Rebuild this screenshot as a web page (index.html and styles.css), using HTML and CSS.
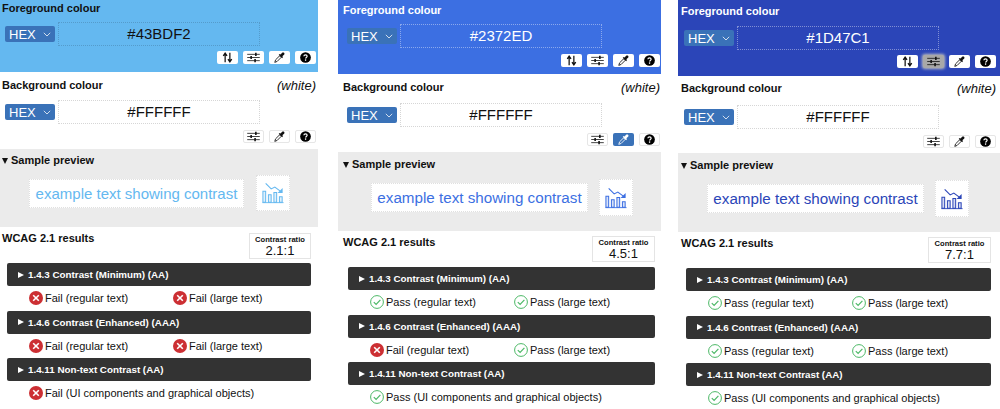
FILE: index.html
```html
<!DOCTYPE html>
<html>
<head>
    <title>Colour Contrast Analyser</title>
    <link rel="stylesheet" href="styles.css">
</head>
<body>
    <svg class="sprites" width="0" height="0">
        <symbol id="i-swap" viewBox="0 0 14 14">
            <path d="M4 13V3M1.6 5 4 1.5 6.4 5M10 1v10M7.6 9 10 12.5 12.4 9" fill="none" stroke="currentColor" stroke-width="1.6"/>
        </symbol>
        <symbol id="i-sliders" viewBox="0 0 18 14">
            <path d="M1 3h16M1 7h16M1 11h16" fill="none" stroke="currentColor" stroke-width="1"/>
            <path d="M11 1h2v4h-2zM5 5h2v4H5zM10 9h2v4h-2z" fill="currentColor"/>
        </symbol>
        <symbol id="i-dropper" viewBox="0 0 14 14">
            <path d="M1 13.2 2 10l5-5 2 2-5 5z" fill="none" stroke="currentColor" stroke-width="1.1"/>
            <path d="M6 3.6 7.4 2.4 8.4 3.3 10.3 1.1c.9-.8 1.9-.6 2.5 0s.8 1.6 0 2.5l-2.2 1.9.9 1-1.2 1.4z" fill="currentColor"/>
        </symbol>
        <symbol id="i-help" viewBox="0 0 14 14">
            <circle cx="7" cy="7" r="6.8" fill="#000"/>
            <path d="M4.9 5.5C5 4.2 5.900 3.600 7 3.600s2.100.7 2.100 1.800c0 1.500-2 1.500-2 3" fill="none" stroke="#fff" stroke-width="1.500"/>
            <circle cx="7.100" cy="10.300" r="1" fill="#fff"/>
        </symbol>
        <symbol id="i-chart" viewBox="0 0 24 24">
            <path d="M1 22V10h3v12zM7 22v-8h3v8zM13 22V11.500h3V22zM19 22v-6h3v6z" fill="currentColor" fill-opacity=".2" stroke="currentColor" stroke-width="1.100"/>
            <path d="M.5 22.500h23" stroke="currentColor" stroke-width="1"/>
            <path d="M4 1.500l6 6 4-2 6 4.500" fill="none" stroke="currentColor" stroke-width="1.200"/>
            <path d="M22.500 6.500V12h-5.500z" fill="currentColor"/>
        </symbol>
        <symbol id="i-fail" viewBox="0 0 14 14">
            <circle cx="7" cy="7" r="7" fill="#cc2f33"/>
            <path d="M4.200 4.200l5.600 5.600M9.800 4.200l-5.600 5.600" stroke="#fff" stroke-width="1.600"/>
        </symbol>
        <symbol id="i-pass" viewBox="0 0 14 14">
            <circle cx="7" cy="7" r="6.400" fill="#fff" stroke="#4cb866" stroke-width="1"/>
            <path d="M3.800 7.200l2.300 2.300 4.300-4.600" fill="none" stroke="#4cb866" stroke-width="1.200"/>
        </symbol>
        <symbol id="i-chevron" viewBox="0 0 8 5">
            <path d="M.8.8 4 4l3.200-3.200" fill="none" stroke="currentColor" stroke-width="1"/>
        </symbol>
    </svg>

    <div class="panels">

        <div class="panel panel-light">
            <div class="fg-section">
                <div class="label">Foreground colour</div>
                <div class="colour-row">
                    <div class="format">HEX <svg class="chevron"><use href="#i-chevron"/></svg></div>
                    <div class="hex-input">#43BDF2</div>
                </div>
                <div class="tools">
                    <button class="tool"><svg class="ic-swap"><use href="#i-swap"/></svg></button>
                    <button class="tool"><svg class="ic-sliders"><use href="#i-sliders"/></svg></button>
                    <button class="tool"><svg class="ic-dropper"><use href="#i-dropper"/></svg></button>
                    <button class="tool"><svg class="ic-help"><use href="#i-help"/></svg></button>
                </div>
            </div>
            <div class="bg-section">
                <div class="label-row"><div class="label">Background colour</div><em class="named">(white)</em></div>
                <div class="colour-row">
                    <div class="format">HEX <svg class="chevron"><use href="#i-chevron"/></svg></div>
                    <div class="hex-input">#FFFFFF</div>
                </div>
                <div class="tools">
                    <button class="tool bordered"><svg class="ic-sliders"><use href="#i-sliders"/></svg></button>
                    <button class="tool bordered"><svg class="ic-dropper"><use href="#i-dropper"/></svg></button>
                    <button class="tool bordered"><svg class="ic-help"><use href="#i-help"/></svg></button>
                </div>
            </div>
            <div class="preview">
                <div class="label"><span class="tri-down"></span>Sample preview</div>
                <div class="preview-row">
                    <div class="preview-text">example text showing contrast</div>
                    <div class="preview-icon"><svg class="ic-chart"><use href="#i-chart"/></svg></div>
                </div>
            </div>
            <div class="results">
                <div class="results-head">
                    <div class="label">WCAG 2.1 results</div>
                    <div class="ratio"><b>Contrast ratio</b><span>2.1:1</span></div>
                </div>
                <div class="bar"><span class="tri-right"></span>1.4.3 Contrast (Minimum) (AA)</div>
                <div class="status-row">
                    <div class="status"><svg class="ic-status"><use href="#i-fail"/></svg>Fail (regular text)</div>
                    <div class="status"><svg class="ic-status"><use href="#i-fail"/></svg>Fail (large text)</div>
                </div>
                <div class="bar"><span class="tri-right"></span>1.4.6 Contrast (Enhanced) (AAA)</div>
                <div class="status-row">
                    <div class="status"><svg class="ic-status"><use href="#i-fail"/></svg>Fail (regular text)</div>
                    <div class="status"><svg class="ic-status"><use href="#i-fail"/></svg>Fail (large text)</div>
                </div>
                <div class="bar"><span class="tri-right"></span>1.4.11 Non-text Contrast (AA)</div>
                <div class="status-row">
                    <div class="status wide"><svg class="ic-status"><use href="#i-fail"/></svg>Fail (UI components and graphical objects)</div>
                </div>
            </div>
        </div>

        <div class="panel panel-mid">
            <div class="fg-section">
                <div class="label">Foreground colour</div>
                <div class="colour-row">
                    <div class="format">HEX <svg class="chevron"><use href="#i-chevron"/></svg></div>
                    <div class="hex-input">#2372ED</div>
                </div>
                <div class="tools">
                    <button class="tool"><svg class="ic-swap"><use href="#i-swap"/></svg></button>
                    <button class="tool"><svg class="ic-sliders"><use href="#i-sliders"/></svg></button>
                    <button class="tool"><svg class="ic-dropper"><use href="#i-dropper"/></svg></button>
                    <button class="tool"><svg class="ic-help"><use href="#i-help"/></svg></button>
                </div>
            </div>
            <div class="bg-section">
                <div class="label-row"><div class="label">Background colour</div><em class="named">(white)</em></div>
                <div class="colour-row">
                    <div class="format">HEX <svg class="chevron"><use href="#i-chevron"/></svg></div>
                    <div class="hex-input">#FFFFFF</div>
                </div>
                <div class="tools">
                    <button class="tool bordered"><svg class="ic-sliders"><use href="#i-sliders"/></svg></button>
                    <button class="tool tool-on"><svg class="ic-dropper"><use href="#i-dropper"/></svg></button>
                    <button class="tool bordered"><svg class="ic-help"><use href="#i-help"/></svg></button>
                </div>
            </div>
            <div class="preview">
                <div class="label"><span class="tri-down"></span>Sample preview</div>
                <div class="preview-row">
                    <div class="preview-text">example text showing contrast</div>
                    <div class="preview-icon"><svg class="ic-chart"><use href="#i-chart"/></svg></div>
                </div>
            </div>
            <div class="results">
                <div class="results-head">
                    <div class="label">WCAG 2.1 results</div>
                    <div class="ratio"><b>Contrast ratio</b><span>4.5:1</span></div>
                </div>
                <div class="bar"><span class="tri-right"></span>1.4.3 Contrast (Minimum) (AA)</div>
                <div class="status-row">
                    <div class="status"><svg class="ic-status"><use href="#i-pass"/></svg>Pass (regular text)</div>
                    <div class="status"><svg class="ic-status"><use href="#i-pass"/></svg>Pass (large text)</div>
                </div>
                <div class="bar"><span class="tri-right"></span>1.4.6 Contrast (Enhanced) (AAA)</div>
                <div class="status-row">
                    <div class="status"><svg class="ic-status"><use href="#i-fail"/></svg>Fail (regular text)</div>
                    <div class="status"><svg class="ic-status"><use href="#i-pass"/></svg>Pass (large text)</div>
                </div>
                <div class="bar"><span class="tri-right"></span>1.4.11 Non-text Contrast (AA)</div>
                <div class="status-row">
                    <div class="status wide"><svg class="ic-status"><use href="#i-pass"/></svg>Pass (UI components and graphical objects)</div>
                </div>
            </div>
        </div>

        <div class="panel panel-dark">
            <div class="fg-section">
                <div class="label">Foreground colour</div>
                <div class="colour-row">
                    <div class="format">HEX <svg class="chevron"><use href="#i-chevron"/></svg></div>
                    <div class="hex-input">#1D47C1</div>
                </div>
                <div class="tools">
                    <button class="tool"><svg class="ic-swap"><use href="#i-swap"/></svg></button>
                    <button class="tool tool-focus"><svg class="ic-sliders"><use href="#i-sliders"/></svg></button>
                    <button class="tool"><svg class="ic-dropper"><use href="#i-dropper"/></svg></button>
                    <button class="tool"><svg class="ic-help"><use href="#i-help"/></svg></button>
                </div>
            </div>
            <div class="bg-section">
                <div class="label-row"><div class="label">Background colour</div><em class="named">(white)</em></div>
                <div class="colour-row">
                    <div class="format">HEX <svg class="chevron"><use href="#i-chevron"/></svg></div>
                    <div class="hex-input">#FFFFFF</div>
                </div>
                <div class="tools">
                    <button class="tool bordered"><svg class="ic-sliders"><use href="#i-sliders"/></svg></button>
                    <button class="tool bordered"><svg class="ic-dropper"><use href="#i-dropper"/></svg></button>
                    <button class="tool bordered"><svg class="ic-help"><use href="#i-help"/></svg></button>
                </div>
            </div>
            <div class="preview">
                <div class="label"><span class="tri-down"></span>Sample preview</div>
                <div class="preview-row">
                    <div class="preview-text">example text showing contrast</div>
                    <div class="preview-icon"><svg class="ic-chart"><use href="#i-chart"/></svg></div>
                </div>
            </div>
            <div class="results">
                <div class="results-head">
                    <div class="label">WCAG 2.1 results</div>
                    <div class="ratio"><b>Contrast ratio</b><span>7.7:1</span></div>
                </div>
                <div class="bar"><span class="tri-right"></span>1.4.3 Contrast (Minimum) (AA)</div>
                <div class="status-row">
                    <div class="status"><svg class="ic-status"><use href="#i-pass"/></svg>Pass (regular text)</div>
                    <div class="status"><svg class="ic-status"><use href="#i-pass"/></svg>Pass (large text)</div>
                </div>
                <div class="bar"><span class="tri-right"></span>1.4.6 Contrast (Enhanced) (AAA)</div>
                <div class="status-row">
                    <div class="status"><svg class="ic-status"><use href="#i-pass"/></svg>Pass (regular text)</div>
                    <div class="status"><svg class="ic-status"><use href="#i-pass"/></svg>Pass (large text)</div>
                </div>
                <div class="bar"><span class="tri-right"></span>1.4.11 Non-text Contrast (AA)</div>
                <div class="status-row">
                    <div class="status wide"><svg class="ic-status"><use href="#i-pass"/></svg>Pass (UI components and graphical objects)</div>
                </div>
            </div>
        </div>

    </div>
</body>
</html>
```

FILE: styles.css
```css
html, body {
    margin: 0;
    height: 409px;
    overflow: hidden;
    background-color: #fff;
    font-family: "Liberation Sans", Arial, sans-serif;
    color: #111;
}
.sprites {
    display: none;
}
.panels {
    display: flex;
    align-items: flex-start;
}

/* the three screenshots differ slightly in scale and offset */
.panel {
    flex: none;
}
.panel-light {
    width: 318px;
    margin-top: -4px;
    --side: 2px;
    --right: 2px;
    --row-left: 3px;
    --bar-left: 7px;
    --bar-right: 7px;
    --fg: #64b8f0;
    --fg-text: #111;
    --fg-h: 76px;
    --fg-top: 5px;
    --fg-row-gap: 7px;
    --fg-tool-gap: 4.5px;
    --bg-h: 77px;
    --bg-top: 6px;
    --bg-row-gap: 6px;
    --sample-h: 78px;
    --sample-top: 4px;
    --sample-left: 27px;
    --sample-w: 215px;
    --sample-font: 15px;
    --sample-gap: 12px;
    --icon-h: 36px;
    --ratio-top: 2px;
    --ratio-w: 62px;
}
.panel-mid {
    width: 323px;
    margin-left: 20px;
    margin-top: -1px;
    --side: 5px;
    --right: 1px;
    --row-left: 4px;
    --bar-left: 10px;
    --bar-right: 6px;
    --fg: #3c6fe2;
    --fg-text: #fff;
    --fg-h: 75px;
    --fg-top: 4px;
    --fg-row-gap: 7px;
    --fg-tool-gap: 5.5px;
    --bg-h: 78px;
    --bg-top: 6px;
    --bg-row-gap: 7px;
    --sample-h: 79px;
    --sample-top: 5px;
    --sample-left: 28px;
    --sample-w: 217px;
    --sample-font: 15.2px;
    --sample-gap: 11px;
    --icon-h: 37px;
    --ratio-top: 1px;
    --ratio-w: 63px;
}
.panel-dark {
    width: 322px;
    margin-left: 17px;
    --side: 3px;
    --right: 4px;
    --row-left: 3px;
    --bar-left: 8px;
    --bar-right: 9px;
    --fg: #2b45b8;
    --fg-text: #fff;
    --fg-h: 76px;
    --fg-top: 4px;
    --fg-row-gap: 8px;
    --fg-tool-gap: 4.5px;
    --bg-h: 77px;
    --bg-top: 5px;
    --bg-row-gap: 8px;
    --sample-h: 79px;
    --sample-top: 5px;
    --sample-left: 26px;
    --sample-w: 217px;
    --sample-font: 15.2px;
    --sample-gap: 11px;
    --icon-h: 37px;
    --ratio-top: 1px;
    --ratio-w: 63px;
}

.label {
    font-size: 11px;
    font-weight: bold;
    line-height: 14px;
}
.fg-section {
    height: var(--fg-h);
    padding: var(--fg-top) var(--right) 0 var(--side);
    box-sizing: border-box;
    background-color: var(--fg);
    color: var(--fg-text);
}
.bg-section {
    height: var(--bg-h);
    padding: var(--bg-top) var(--right) 0 var(--side);
    box-sizing: border-box;
}
.label-row {
    display: flex;
    justify-content: space-between;
}
.named {
    font-size: 13px;
    line-height: 16px;
}
.colour-row {
    display: flex;
    align-items: center;
    gap: 3px;
    margin-top: var(--bg-row-gap);
    padding-left: var(--row-left);
}
.fg-section .colour-row {
    margin-top: var(--fg-row-gap);
}
.format {
    display: flex;
    justify-content: space-between;
    align-items: center;
    box-sizing: border-box;
    width: 50px;
    height: 16px;
    padding: 0 4px;
    background-color: #3a72b8;
    border-radius: 2px;
    color: #fff;
    font-size: 13px;
}
.chevron {
    width: 8px;
    height: 5px;
    color: #cfdcec;
}
.hex-input {
    width: 200px;
    height: 22px;
    border: 1px dotted #d6d6d6;
    font-size: 15px;
    line-height: 22px;
    text-align: center;
}
.fg-section .hex-input {
    border-color: rgba(255, 255, 255, 0.4);
}
.panel-light .fg-section .hex-input {
    border-color: rgba(0, 0, 0, 0.15);
}
.tools {
    display: flex;
    justify-content: flex-end;
    gap: 4.5px;
    margin-top: 5.5px;
}
.fg-section .tools {
    margin-top: var(--fg-tool-gap);
}
.tool {
    display: flex;
    align-items: center;
    justify-content: center;
    box-sizing: border-box;
    width: 21.5px;
    height: 13px;
    padding: 0;
    border: none;
    border-radius: 2px;
    background-color: #fff;
    color: #111;
}
.tool.bordered {
    border: 1px solid #e6e6e6;
}
.tool-on {
    background-color: #3a72b8;
    color: #fff;
}
.tool-focus {
    background-color: #a8a8a8;
    box-shadow: 0 0 3px 1px #bdbdbd;
}
.ic-swap {
    width: 11px;
    height: 11px;
}
.ic-sliders {
    width: 15px;
    height: 11px;
}
.ic-dropper {
    width: 11px;
    height: 11px;
}
.ic-help {
    width: 11px;
    height: 11px;
}

.preview {
    height: var(--sample-h);
    padding: var(--sample-top) 0 0 var(--side);
    box-sizing: border-box;
    background-color: #ebebeb;
}
.tri-down {
    display: inline-block;
    margin-right: 3px;
    border-top: 6px solid #111;
    border-left: 3.5px solid transparent;
    border-right: 3.5px solid transparent;
}
.tri-right {
    display: inline-block;
    margin-right: 4px;
    border-left: 6px solid #fff;
    border-top: 3.5px solid transparent;
    border-bottom: 3.5px solid transparent;
}
.preview-row {
    display: flex;
    align-items: center;
    gap: var(--sample-gap);
    margin-top: 8px;
    padding-left: var(--sample-left);
}
.preview-text {
    width: var(--sample-w);
    height: 29px;
    box-sizing: border-box;
    border: 1px dotted #e0e0e0;
    background-color: #fff;
    color: var(--fg);
    font-size: var(--sample-font);
    line-height: 27px;
    text-align: center;
}
.preview-icon {
    display: flex;
    align-items: center;
    justify-content: center;
    width: 34px;
    height: var(--icon-h);
    box-sizing: border-box;
    border: 1px dotted #e0e0e0;
    background-color: #fff;
    color: var(--fg);
}
.ic-chart {
    width: 22px;
    height: 22px;
}

.results {
    padding: 4px var(--bar-right) 0 var(--side);
}
.results-head {
    display: flex;
    justify-content: space-between;
    align-items: flex-start;
    height: 32px;
}
.ratio {
    display: flex;
    flex-direction: column;
    align-items: center;
    box-sizing: border-box;
    width: var(--ratio-w);
    height: 25.5px;
    margin-top: var(--ratio-top);
    border: 1px solid #e4e4e4;
}
.ratio b {
    font-size: 7.6px;
    line-height: 11px;
}
.ratio span {
    font-size: 13px;
    line-height: 12px;
}
.bar {
    display: flex;
    align-items: center;
    box-sizing: border-box;
    height: 23px;
    margin-left: calc(var(--bar-left) - var(--side));
    padding-left: 11px;
    background-color: #333;
    border-radius: 2px;
    color: #fff;
    font-size: 9.8px;
    font-weight: bold;
}
.status-row {
    display: flex;
    align-items: center;
    height: 24.5px;
    margin-left: calc(var(--bar-left) - var(--side));
    padding-left: 22px;
}
.status {
    display: flex;
    flex: none;
    align-items: center;
    width: 144px;
    font-size: 11px;
    white-space: nowrap;
}
.status.wide {
    width: auto;
}
.ic-status {
    width: 14px;
    height: 14px;
    margin-right: 2px;
}
```
